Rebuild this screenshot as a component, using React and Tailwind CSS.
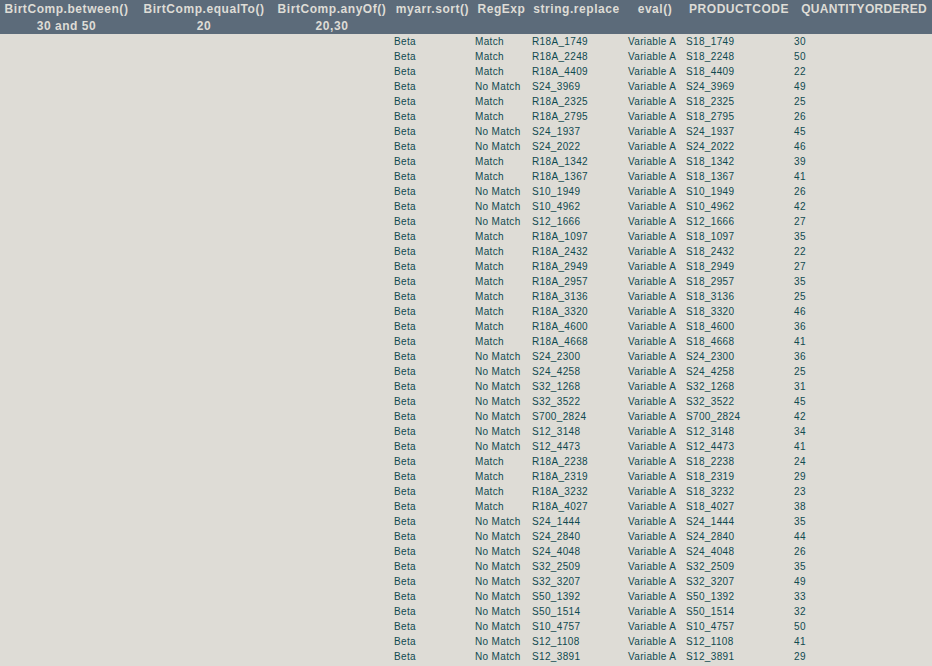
const raw = `R18A_1749 S18_1749 30
R18A_2248 S18_2248 50
R18A_4409 S18_4409 22
S24_3969 S24_3969 49
R18A_2325 S18_2325 25
R18A_2795 S18_2795 26
S24_1937 S24_1937 45
S24_2022 S24_2022 46
R18A_1342 S18_1342 39
R18A_1367 S18_1367 41
S10_1949 S10_1949 26
S10_4962 S10_4962 42
S12_1666 S12_1666 27
R18A_1097 S18_1097 35
R18A_2432 S18_2432 22
R18A_2949 S18_2949 27
R18A_2957 S18_2957 35
R18A_3136 S18_3136 25
R18A_3320 S18_3320 46
R18A_4600 S18_4600 36
R18A_4668 S18_4668 41
S24_2300 S24_2300 36
S24_4258 S24_4258 25
S32_1268 S32_1268 31
S32_3522 S32_3522 45
S700_2824 S700_2824 42
S12_3148 S12_3148 34
S12_4473 S12_4473 41
R18A_2238 S18_2238 24
R18A_2319 S18_2319 29
R18A_3232 S18_3232 23
R18A_4027 S18_4027 38
S24_1444 S24_1444 35
S24_2840 S24_2840 44
S24_4048 S24_4048 26
S32_2509 S32_2509 35
S32_3207 S32_3207 49
S50_1392 S50_1392 33
S50_1514 S50_1514 32
S10_4757 S10_4757 50
S12_1108 S12_1108 41
S12_3891 S12_3891 29`.split("\n").map((l) => l.split(" "));

const cols = "grid grid-cols-[136px_136px_120px_81px_57px_96px_58px_108px_140px]";

export default function App() {
  return (
    <div className="min-h-[666px] w-[932px] overflow-hidden bg-[#dedcd6] font-['Liberation_Sans',sans-serif]">
      <div className={`${cols} h-[34px] bg-[#5c6b7a] pt-px text-center text-[12px] leading-[17px] font-bold tracking-[0.55px] whitespace-nowrap text-[#dedcd6]`}>
        <div className="pr-[3px]">BirtComp.between()<br />30 and 50</div>
        <div>BirtComp.equalTo()<br />20</div>
        <div>BirtComp.anyOf()<br />20,30</div>
        <div>myarr.sort()</div>
        <div>RegExp</div>
        <div className="pr-[3px]">string.replace</div>
        <div>eval()</div>
        <div className="pl-[5px] text-left">PRODUCTCODE</div>
        <div className="flex justify-end pr-[5px] tracking-[0.3px]">QUANTITYORDERED</div>
      </div>
      {raw.map(([code, product, qty], i) => (
        <div key={i} className={`${cols} h-[15px] text-[10px] leading-[15px] tracking-[0.35px] whitespace-nowrap text-[#104a50]`}>
          <div />
          <div />
          <div />
          <div className="pl-[2px]">Beta</div>
          <div className="pl-[2px]">{code.startsWith("R18A") ? "Match" : "No Match"}</div>
          <div className="pl-[2px]">{code}</div>
          <div className="pl-[2px]">Variable A</div>
          <div className="pl-[2px]">{product}</div>
          <div className="pl-[2px]">{qty}</div>
        </div>
      ))}
    </div>
  );
}
